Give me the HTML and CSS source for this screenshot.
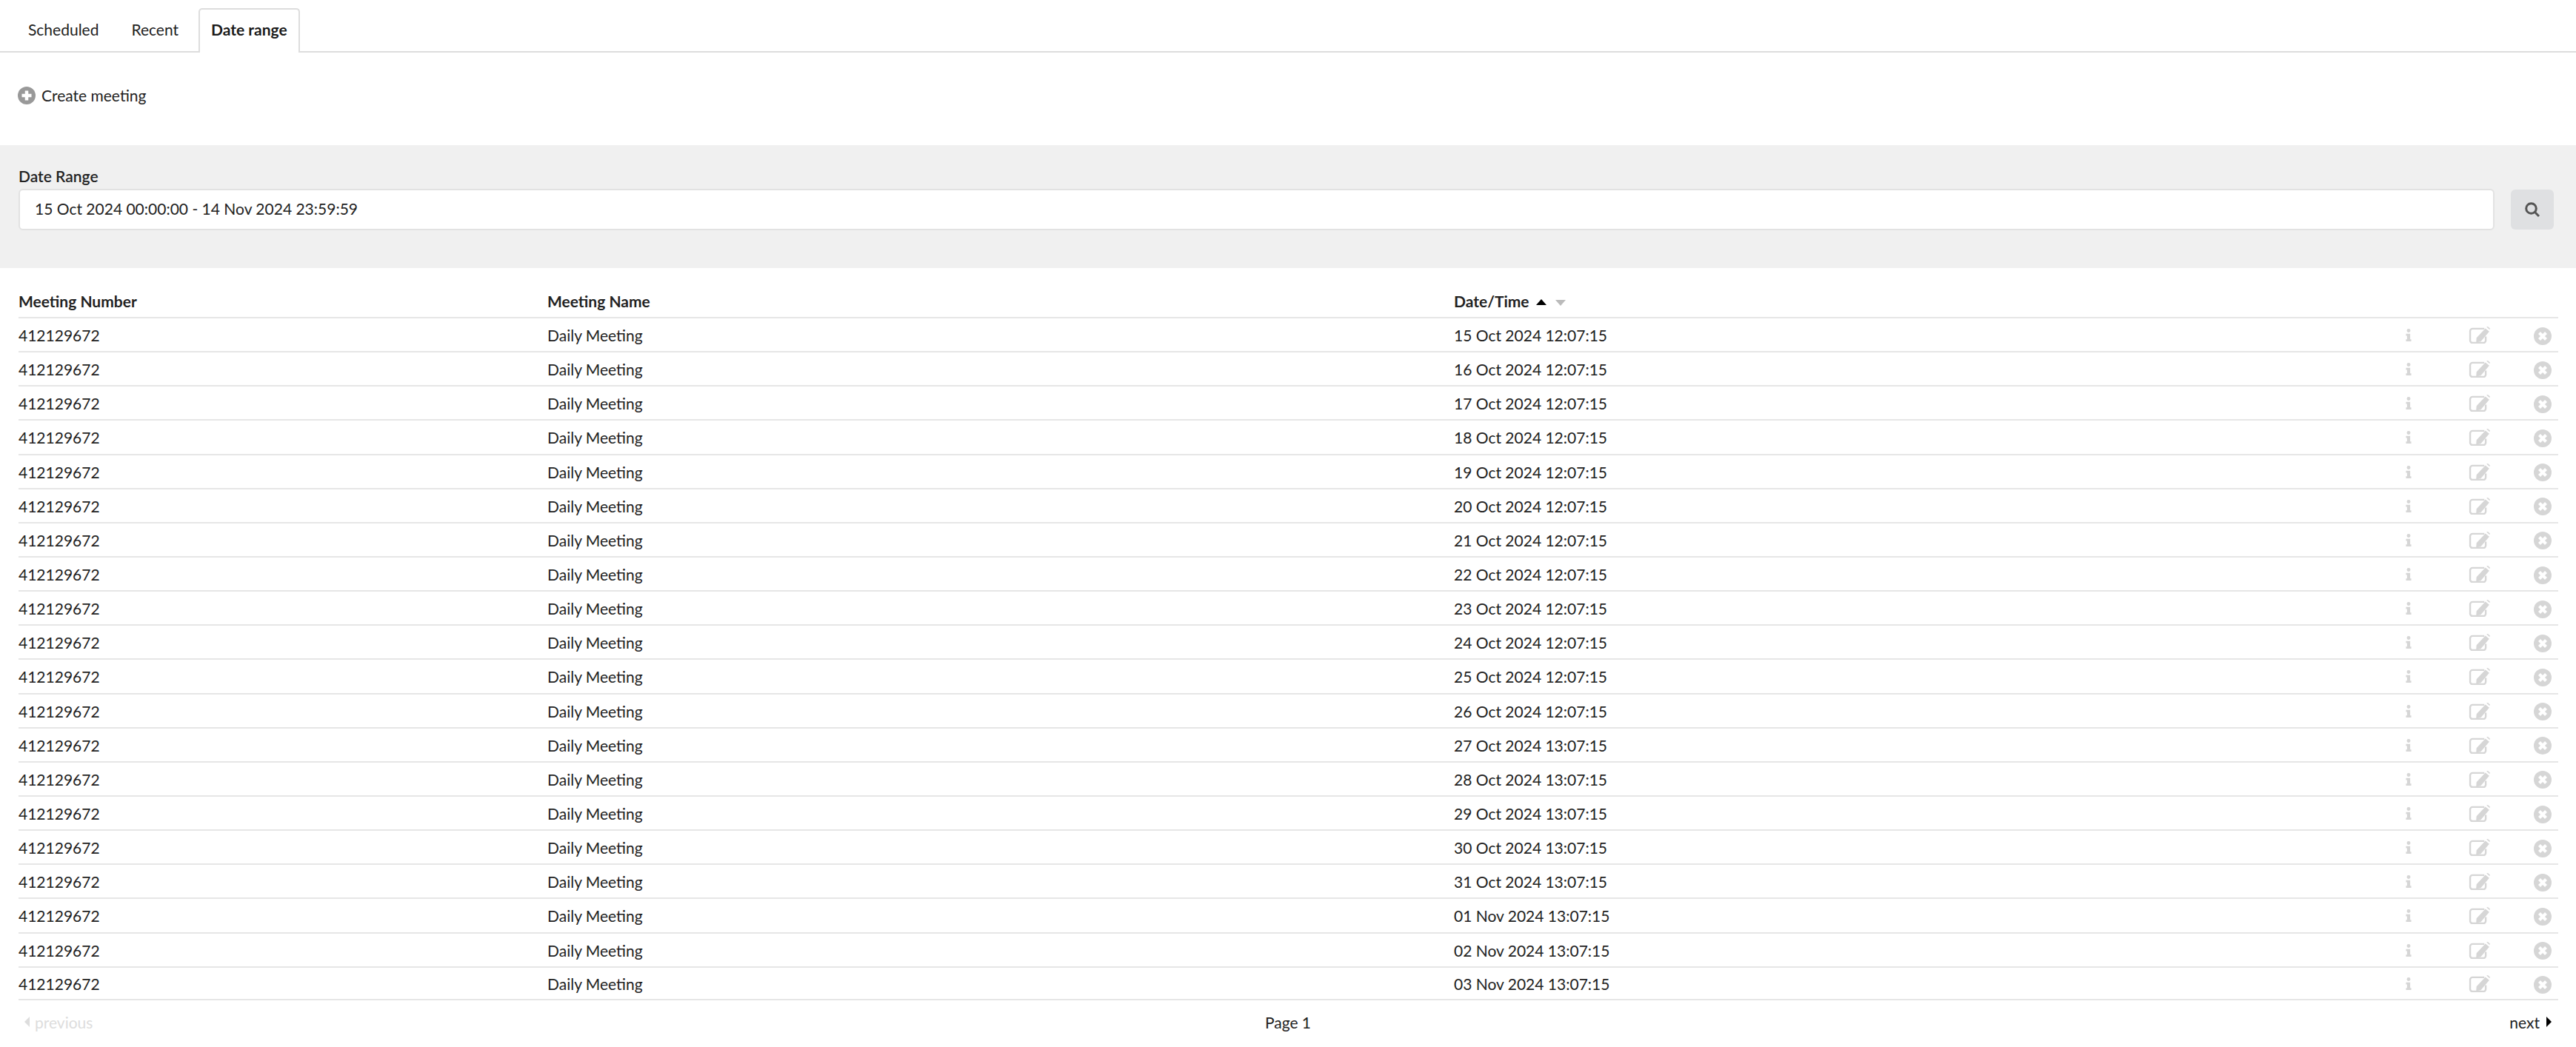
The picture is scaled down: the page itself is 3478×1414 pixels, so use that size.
FILE: index.html
```html
<!DOCTYPE html>
<html lang="en">
<head>
    <meta charset="UTF-8">
    <title>Meetings</title>
    <link rel="stylesheet" href="styles.css">
</head>
<body>
    <svg class="sprites" width="0" height="0">
        <symbol id="i-info" viewBox="0 0 10 24">
            <circle cx="5" cy="3.500" r="3.500"/>
            <path d="M0 9.500h8v10.500h2v4h-10v-4h2v-6.500h-2z"/>
        </symbol>
        <symbol id="i-edit" viewBox="0 0 30 24">
            <path class="edit-box" d="M24 14v5.500a3.500 3.500 0 0 1-3.500 3.500h-15a3.500 3.500 0 0 1-3.500-3.500v-13a3.500 3.500 0 0 1 3.500-3.500h16.500"/>
            <path d="M23.500 2.500l5.500 4.500-12 14-6.500 1.500 0.500-6.500z M25 0.500l2-0.500 3 2.500-0.500 2z"/>
        </symbol>
        <symbol id="i-close" viewBox="0 0 24 24">
            <circle cx="12" cy="12" r="12"/>
            <path class="cross" d="M7.500 7.500l9 9M16.500 7.500l-9 9"/>
        </symbol>
    </svg>

    <ul class="tabs">
        <li class="tab">Scheduled</li>
        <li class="tab">Recent</li>
        <li class="tab active">Date range</li>
    </ul>

    <div class="toolbar">
        <a class="create-link">
            <svg class="plus-icon" viewBox="0 0 24 24">
                <circle cx="12" cy="12" r="12"/>
                <path class="plus" d="M12 5.500v13M5.500 12h13"/>
            </svg>
            Create meeting
        </a>
    </div>

    <form class="filter">
        <label class="filter-label">Date Range</label>
        <div class="filter-row">
            <div class="date-input">15 Oct 2024 00:00:00 - 14 Nov 2024 23:59:59</div>
            <button class="search-btn" type="button">
                <svg class="search-icon" viewBox="0 0 20 20">
                    <circle cx="8.500" cy="8.500" r="6.800"/>
                    <path d="M13 13l6 6"/>
                </svg>
            </button>
        </div>
    </form>

    <table class="meetings">
        <thead>
            <tr>
                <th class="col-number">Meeting Number</th>
                <th class="col-name">Meeting Name</th>
                <th class="col-date">Date/Time <span class="sort-up"></span><span class="sort-down"></span></th>
                <th class="col-info"></th>
                <th class="col-edit"></th>
                <th class="col-close"></th>
            </tr>
        </thead>
        <tbody id="rows"></tbody>
    </table>

    <div class="pager">
        <span class="pager-prev"><span class="arrow-left"></span>previous</span>
        <span class="pager-page">Page 1</span>
        <span class="pager-next">next<span class="arrow-right"></span></span>
    </div>

    <script>
        const dates = [
            '15 Oct 2024 12:07:15', '16 Oct 2024 12:07:15', '17 Oct 2024 12:07:15', '18 Oct 2024 12:07:15',
            '19 Oct 2024 12:07:15', '20 Oct 2024 12:07:15', '21 Oct 2024 12:07:15', '22 Oct 2024 12:07:15',
            '23 Oct 2024 12:07:15', '24 Oct 2024 12:07:15', '25 Oct 2024 12:07:15', '26 Oct 2024 12:07:15',
            '27 Oct 2024 13:07:15', '28 Oct 2024 13:07:15', '29 Oct 2024 13:07:15', '30 Oct 2024 13:07:15',
            '31 Oct 2024 13:07:15', '01 Nov 2024 13:07:15', '02 Nov 2024 13:07:15', '03 Nov 2024 13:07:15'
        ];

        // Same row for every date
        document.getElementById('rows').innerHTML = dates.map(date => `
            <tr>
                <td>412129672</td>
                <td>Daily Meeting</td>
                <td>${date}</td>
                <td class="action"><svg class="icon icon-info"><use href="#i-info"/></svg></td>
                <td class="action"><svg class="icon icon-edit"><use href="#i-edit"/></svg></td>
                <td class="action"><svg class="icon icon-close"><use href="#i-close"/></svg></td>
            </tr>`).join('');
    </script>
</body>
</html>
```

FILE: styles.css
```css
* {
    box-sizing: border-box;
}
body {
    margin: 0;
    font-family: Lato, "Open Sans", sans-serif;
    font-size: 21px;
    color: #222;
    background-color: #fff;
}
.sprites {
    position: absolute;
}

/* tabs */
.tabs {
    display: flex;
    gap: 10px;
    height: 71px;
    margin: 0;
    padding: 11px 0 0 21px;
    list-style: none;
    border-bottom: 2px solid #ddd;
}
.tab {
    height: 60px;
    padding: 0 15px;
    line-height: 54px;
    border: 2px solid transparent;
    border-bottom: 0;
    border-radius: 5px 5px 0 0;
}
.tab.active {
    font-weight: 700;
    color: #1a1a1a;
    background-color: #fff;
    border-color: #ddd;
}

/* create link */
.toolbar {
    height: 125px;
    padding: 46px 24px 0;
}
.create-link {
    display: flex;
    align-items: center;
    gap: 8px;
    height: 24px;
    line-height: 22px;
}
.plus-icon {
    width: 24px;
    height: 24px;
    fill: #999;
}
.plus {
    fill: none;
    stroke: #fff;
    stroke-width: 4.500;
}

/* date range band */
.filter {
    height: 166px;
    padding: 29px 30px 0 25px;
    background-color: #f0f0f0;
}
.filter-label {
    display: block;
    height: 30px;
    font-weight: 600;
    line-height: 25px;
}
.filter-row {
    display: flex;
    align-items: center;
    gap: 22px;
}
.date-input {
    flex: 1;
    height: 56px;
    padding: 0 20px;
    line-height: 50px;
    background-color: #fff;
    border: 2px solid #e2e2e2;
    border-radius: 6px;
}
.search-btn {
    width: 58px;
    height: 54px;
    padding: 0;
    background-color: #dfe0e2;
    border: 0;
    border-radius: 6px;
}
.search-icon {
    display: block;
    width: 20px;
    height: 20px;
    margin: auto;
    fill: none;
    stroke: #555;
    stroke-width: 3;
}

/* table */
.meetings {
    width: 3429px;
    margin: 0 0 0 25px;
    border-collapse: collapse;
    table-layout: fixed;
}
.meetings th {
    height: 67px;
    padding: 23px 0 0;
    font-weight: 700;
    text-align: left;
    border-bottom: 2px solid #e6e6e6;
}
.meetings td {
    height: 46.150px;
    padding: 1px 0 0;
    border-bottom: 2px solid #e6e6e6;
}
.meetings tr:last-child td {
    height: 44px;
    padding-top: 2px;
}
.col-number {
    width: 714px;
}
.col-name {
    width: 1224px;
}
.col-date {
    width: 1259px;
}
.col-info {
    width: 60px;
}
.col-edit {
    width: 130px;
}
.col-close {
    width: 42px;
}
.sort-up,
.sort-down {
    display: inline-block;
    width: 0;
    height: 0;
    margin-left: 4px;
    vertical-align: 3px;
    border-left: 7px solid transparent;
    border-right: 7px solid transparent;
}
.sort-up {
    border-bottom: 8px solid #000;
}
.sort-down {
    margin-left: 12px;
    vertical-align: 2px;
    border-top: 8px solid #bbb;
}
.action {
    text-align: center;
}
.icon {
    display: block;
    margin: auto;
    fill: #d6d6d6;
}
.icon-info {
    width: 8px;
    height: 17px;
}
.icon-edit {
    width: 29px;
    height: 23px;
}
.icon-close {
    width: 24px;
    height: 24px;
    margin-top: 2px;
}
.edit-box {
    fill: none;
    stroke: #d6d6d6;
    stroke-width: 2.500;
}
.cross {
    fill: none;
    stroke: #fff;
    stroke-width: 4.200;
}

/* pager */
.pager {
    display: grid;
    grid-template-columns: 1fr auto 1fr;
    padding: 17px 33px 0 33px;
}
.pager-prev {
    color: #ddd;
}
.pager-next {
    text-align: right;
}
.arrow-left,
.arrow-right {
    display: inline-block;
    width: 0;
    height: 0;
    vertical-align: 2px;
    border-top: 7px solid transparent;
    border-bottom: 7px solid transparent;
}
.arrow-left {
    margin-right: 7px;
    border-right: 7px solid #ddd;
}
.arrow-right {
    margin-left: 9px;
    border-left: 7px solid #000;
}
```
